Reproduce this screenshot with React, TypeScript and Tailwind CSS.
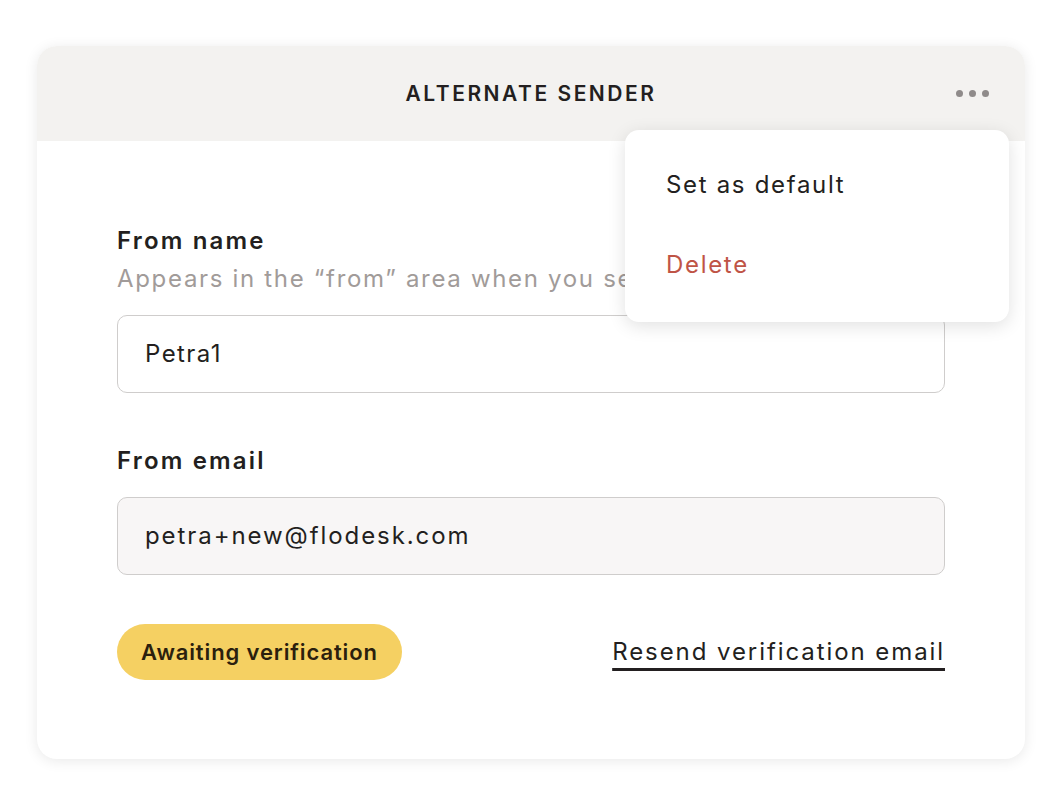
import React from "react";

const font = { fontFamily: "Inter, 'Noto Sans', sans-serif" };

function Field({
  label,
  hint,
  value,
  muted,
}: {
  label: string;
  hint?: string;
  value: string;
  muted?: boolean;
}) {
  return (
    <div className="flex flex-col">
      <div className="text-[24px] leading-[38px] font-semibold tracking-[0.09em] text-[#231f20]">{label}</div>
      {hint && (
        <div className="whitespace-nowrap text-[24px] leading-[38px] tracking-[0.07em] text-[#a19b99]">{hint}</div>
      )}
      <div
        className={
          muted
            ? "mt-[17px] flex h-[78px] items-center rounded-[10px] border border-[#cfcdcc] bg-[#f8f6f6] px-[27px] text-[24px] tracking-[0.08em] text-[#231f20]"
            : "mt-[17px] flex h-[78px] items-center rounded-[10px] border border-[#cfcdcc] bg-white px-[27px] text-[24px] tracking-[0.06em] text-[#231f20]"
        }
      >
        {value}
      </div>
    </div>
  );
}

export default function App() {
  return (
    <div className="min-h-screen bg-white pl-[37px] pt-[46px]" style={font}>
      <div className="relative w-[988px] rounded-[20px] bg-white shadow-[0_2px_14px_rgba(0,0,0,0.09)]">
        <div className="relative flex h-[95px] items-center justify-center rounded-t-[20px] bg-[#f3f2f0]">
          <h1 className="text-[21px] font-semibold tracking-[0.12em] text-[#231f20]">ALTERNATE SENDER</h1>
          <button className="absolute right-[36px] top-[44px] flex gap-[6px]">
            <span className="h-[7px] w-[7px] rounded-full bg-[#8f8b8a]" />
            <span className="h-[7px] w-[7px] rounded-full bg-[#8f8b8a]" />
            <span className="h-[7px] w-[7px] rounded-full bg-[#8f8b8a]" />
          </button>
        </div>

        <div className="flex flex-col px-20 pb-[79px] pt-[81px]">
          <Field label="From name" hint="Appears in the “from” area when you send emails" value="Petra1" />
          <div className="mt-[49px]">
            <Field label="From email" value="petra+new@flodesk.com" muted />
          </div>
          <div className="mt-[49px] flex items-center justify-between">
            <span className="flex h-[56px] items-center rounded-full bg-[#f5d062] px-[24px] text-[22px] font-semibold tracking-[0.04em] text-[#2b1f0e]">
              Awaiting verification
            </span>
            <a className="text-[24px] leading-[32px] tracking-[0.08em] text-[#231f20] underline decoration-[3px] underline-offset-[8px]">
              Resend verification email
            </a>
          </div>
        </div>

        <div className="absolute left-[588px] top-[84px] flex w-[384px] flex-col rounded-[14px] bg-white pb-[17px] pt-[15px] shadow-[0_4px_18px_rgba(0,0,0,0.12)]">
          <div className="flex h-[80px] items-center px-[41px] text-[24px] tracking-[0.07em] text-[#231f20]">Set as default</div>
          <div className="flex h-[80px] items-center px-[41px] text-[24px] tracking-[0.07em] text-[#bf5446]">Delete</div>
        </div>
      </div>
    </div>
  );
}
